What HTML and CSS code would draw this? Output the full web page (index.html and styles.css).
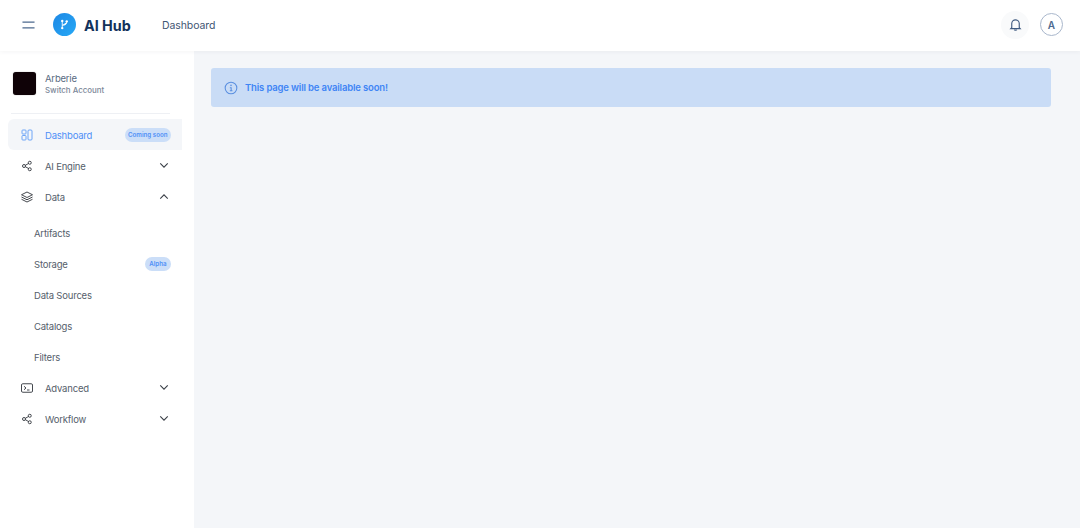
FILE: index.html
```html
<!DOCTYPE html>
<html lang="en">
<head>
<meta charset="utf-8">
<title>AI Hub</title>
<link rel="stylesheet" href="styles.css">
</head>
<body>
<header class="topbar">
  <button class="menu-btn" aria-label="Menu"><svg class="menu-icon" viewBox="0 0 14 8"><path d="M0.5 1H13.5M0.5 7H13.5"/></svg></button>
  <div class="logo"><svg viewBox="0 0 10 12" class="logo-mark"><path d="M2.5 1.5V10.5M2.5 6.8C5.8 6.8 7.5 6 7.5 3.2"/><circle cx="2.5" cy="2" r="1.300"/><circle cx="7.5" cy="2.5" r="1.300"/><circle cx="2.5" cy="10" r="1.300"/></svg></div>
  <span class="brand">AI Hub</span>
  <span class="page-title">Dashboard</span>
  <div class="top-actions">
    <button class="bell" aria-label="Notifications"><svg viewBox="0 0 24 24" class="bell-icon"><path d="M6 17V10.5a6 6 0 0 1 12 0V17l1.5 1.5h-15zM10 20.5c.5 1 3.500 1 4 0"/></svg></button>
    <div class="avatar">A</div>
  </div>
</header>
<div class="shell">
  <aside class="sidebar">
    <div class="account">
      <div class="account-pic"></div>
      <div class="account-text"><div class="account-name">Arberie</div><div class="account-switch">Switch Account</div></div>
    </div>
    <nav class="nav">
      <a class="item active">
        <svg class="ico ico-blue" viewBox="0 0 24 24"><rect x="2" y="2" width="8" height="8" rx="1.500"/><rect x="2" y="13" width="8" height="9" rx="1.500"/><rect x="14" y="2" width="8" height="20" rx="2"/></svg>
        <span class="label">Dashboard</span><span class="badge">Coming soon</span>
      </a>
      <a class="item">
        <svg class="ico" viewBox="0 0 24 24"><circle cx="6" cy="12" r="3"/><circle cx="17.500" cy="5.500" r="3"/><circle cx="17.500" cy="18.500" r="3"/><path d="M8.500 10.700L15 7M8.500 13.300L15 17"/></svg>
        <span class="label">AI Engine</span>
        <svg class="chev" viewBox="0 0 12 8"><path d="M1.500 1.500L6 6L10.500 1.500"/></svg>
      </a>
      <a class="item">
        <svg class="ico" viewBox="0 0 24 24"><path d="M12 2L23 7.500L12 13L1 7.500zM1 12L12 17.500L23 12M1 16.500L12 22L23 16.500"/></svg>
        <span class="label">Data</span>
        <svg class="chev" viewBox="0 0 12 8"><path d="M1.500 6.500L6 2L10.500 6.500"/></svg>
      </a>
      <div class="subs">
        <a class="sub"><span class="label">Artifacts</span></a>
        <a class="sub"><span class="label">Storage</span><span class="badge badge-alpha">Alpha</span></a>
        <a class="sub"><span class="label">Data Sources</span></a>
        <a class="sub"><span class="label">Catalogs</span></a>
        <a class="sub"><span class="label">Filters</span></a>
      </div>
      <a class="item">
        <svg class="ico" viewBox="0 0 24 24"><rect x="1" y="3.500" width="22" height="17" rx="2.500"/><path d="M6 8.500L10 12L6 15.500M12 16H17"/></svg>
        <span class="label">Advanced</span>
        <svg class="chev" viewBox="0 0 12 8"><path d="M1.500 1.500L6 6L10.500 1.500"/></svg>
      </a>
      <a class="item">
        <svg class="ico" viewBox="0 0 24 24"><circle cx="6" cy="12" r="3"/><circle cx="17.500" cy="5.500" r="3"/><circle cx="17.500" cy="18.500" r="3"/><path d="M8.500 10.700L15 7M8.500 13.300L15 17"/></svg>
        <span class="label">Workflow</span>
        <svg class="chev" viewBox="0 0 12 8"><path d="M1.500 1.500L6 6L10.500 1.500"/></svg>
      </a>
    </nav>
  </aside>
  <main class="content">
    <div class="alert">
      <svg class="alert-icon" viewBox="0 0 24 24"><circle cx="12" cy="12" r="10"/><path d="M10 11.500H12.300V16.500M10 16.800H14.500"/><circle class="dot" cx="12" cy="7.500" r="1.300"/></svg>
      <span>This page will be available soon!</span>
    </div>
  </main>
</div>
</body>
</html>
```
FILE: styles.css
```css
* { box-sizing: border-box; }
html, body { margin: 0; height: 100%; }
body { font-family: Inter, "Liberation Sans", sans-serif; background: #f4f6f9; color: #4b5563; overflow: hidden; }
button { border: 0; background: none; padding: 0; font: inherit; }

.topbar { height: 51px; background: #fff; display: flex; align-items: center; padding: 0 16px 0 22px; box-shadow: 0 1px 4px rgba(60,70,90,.06); position: relative; z-index: 2; }
.menu-btn { width: 13px; height: 8px; display: flex; margin-right: 18px; margin-top: -2px; }
.menu-icon { width: 13px; height: 8px; fill: none; stroke: #4d6a8f; stroke-width: 1.300; }
.logo { width: 23px; height: 23px; border-radius: 50%; background: linear-gradient(135deg, #1e88e5, #26a8f5); display: flex; align-items: center; justify-content: center; margin-top: -2px; }
.logo-mark { width: 9px; height: 11px; fill: #fff; stroke: #fff; stroke-width: 1; }
.logo-mark circle { stroke: none; }
.brand { margin-left: 8px; font-size: 14.300px; font-weight: 700; color: #12325b; width: 78px; }
.page-title { font-size: 10.500px; letter-spacing: -.1px; color: #3f5673; margin-top: -1px; }
.top-actions { margin-left: auto; display: flex; align-items: center; gap: 11px; margin-top: -2px; margin-right: 1px; }
.bell { width: 28px; height: 28px; border-radius: 50%; background: #f9fafb; display: flex; align-items: center; justify-content: center; }
.bell-icon { width: 15px; height: 15px; fill: none; stroke: #3f5a80; stroke-width: 1.800; }
.avatar { width: 23px; height: 23px; border-radius: 50%; border: 1px solid #a9b7cc; display: flex; align-items: center; justify-content: center; font-size: 10px; font-weight: 600; color: #4d6a8f; }

.shell { display: flex; height: 477px; }
.sidebar { width: 194px; background: #fff; padding: 20px 12px 0 8px; flex: none; }
.account { display: flex; align-items: center; gap: 9px; padding: 0 0 17px 2px; margin: 0 12px 0 3px; border-bottom: 1px solid #eef0f4; }
.account-pic { width: 23px; height: 23px; border-radius: 3px; background: #0f0207; box-shadow: 0 0 1px #777; }
.account-name { font-size: 9.500px; letter-spacing: -.2px; line-height: 14px; color: #5a6b82; padding-top: 1px; }
.account-switch { font-size: 7.900px; line-height: 11px; font-weight: 500; color: #7b8798; margin-top: -1px; }

.nav { display: flex; flex-direction: column; margin-top: 5px; }
.subs { display: flex; flex-direction: column; padding-top: 5px; }
.item, .sub { height: 31px; display: flex; align-items: center; font-size: 9.500px; letter-spacing: -.2px; color: #555e6b; padding-right: 11px; }
.item { padding-left: 13px; }
.sub { padding-left: 26px; }
.item.active { background: #f4f6f9; border-radius: 6px 0 0 6px; color: #4f8ff7; }
.label { flex: 1; padding-top: 1px; }
.ico { width: 12px; height: 12px; margin-right: 12px; fill: none; stroke: #30343b; stroke-width: 1.800; flex: none; }
.ico-blue { stroke: #5f9cf6; }
.chev { width: 10px; height: 7px; fill: none; stroke: #3a3f47; stroke-width: 1.300; margin-right: 2px; }
.badge { height: 14px; border-radius: 7px; background: #cbdef8; color: #4f8ff7; font-size: 6.200px; letter-spacing: 0; font-weight: 600; display: flex; align-items: center; padding: 0 3.500px; }
.badge-alpha { padding: 0 4.500px; }

.content { flex: 1; padding: 17px 29px 0 17px; }
.alert { height: 39px; background: #c9dcf6; border-radius: 3px; display: flex; align-items: center; gap: 7px; padding-left: 13px; font-size: 9.500px; letter-spacing: -.16px; font-weight: 600; color: #3f85f5; }
.alert-icon { width: 14px; height: 14px; fill: none; stroke: #5a8fe0; stroke-width: 1.800; }
.alert-icon .dot { fill: #5a8fe0; stroke: none; }
```
